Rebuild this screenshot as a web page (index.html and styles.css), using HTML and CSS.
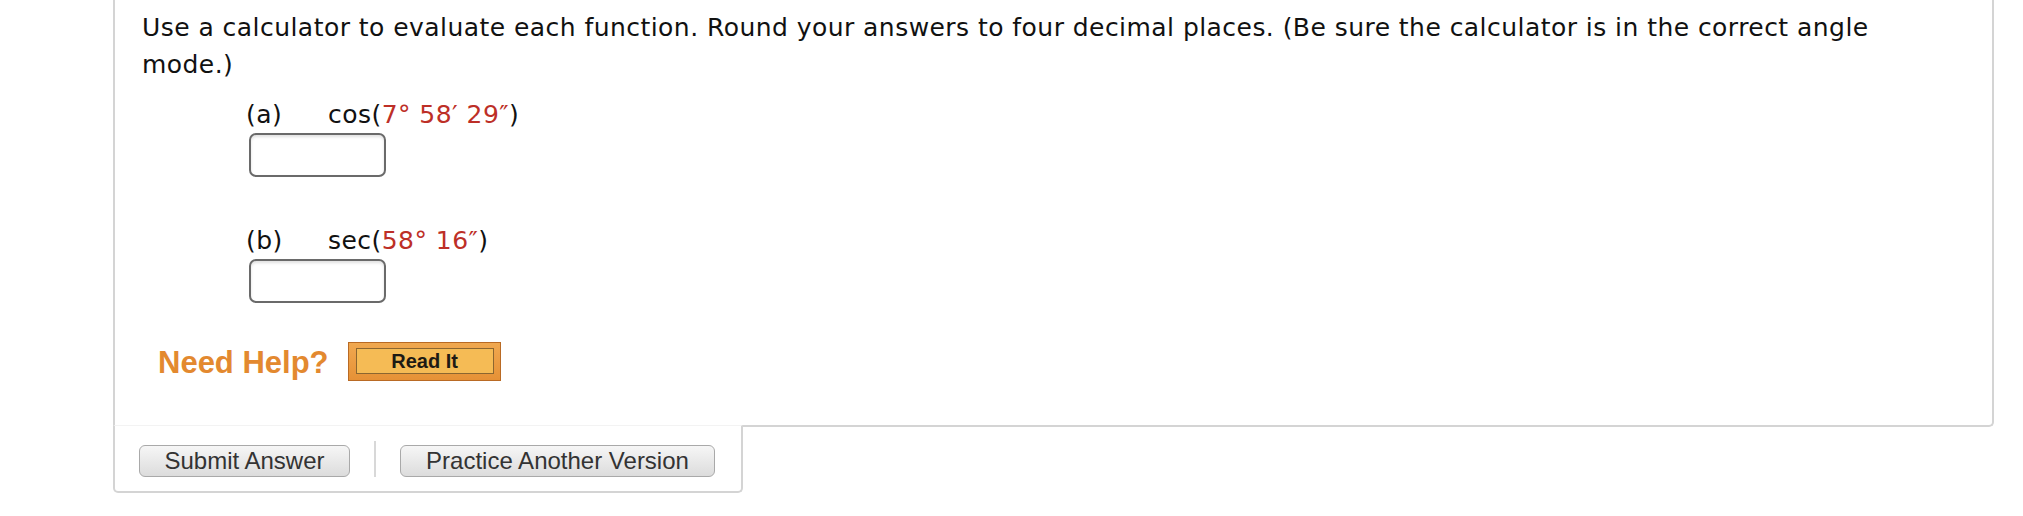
FILE: index.html
```html
<!DOCTYPE html>
<html>
<head>
<meta charset="utf-8">
<link rel="stylesheet" href="styles.css">
</head>
<body>
<div class="page">
  <div class="question">
    <p class="prompt">Use a calculator to evaluate each function. Round your answers to four decimal places. (Be sure the calculator is in the correct angle mode.)</p>
    <div class="part">
      <div class="part-line"><span class="part-label">(a)</span><span>cos(<span class="rand">7° 58′ 29″</span>)</span></div>
      <div class="answer"></div>
    </div>
    <div class="part">
      <div class="part-line"><span class="part-label">(b)</span><span>sec(<span class="rand">58° 16″</span>)</span></div>
      <div class="answer"></div>
    </div>
    <div class="help">
      <span class="help-text">Need Help?</span>
      <span class="read-it"><span class="read-it-inner">Read It</span></span>
    </div>
  </div>
  <div class="actions">
    <button class="btn">Submit Answer</button>
    <span class="sep"></span>
    <button class="btn btn-wide">Practice Another Version</button>
  </div>
</div>
</body>
</html>
```
FILE: styles.css
```css
html, body {
  margin: 0;
  padding: 0;
  background: #ffffff;
}
.page {
  margin-left: 113px;
  width: 1881px;
  font-family: "DejaVu Sans", Verdana, sans-serif;
  color: #111;
}
.question {
  box-sizing: border-box;
  border: 2px solid #d4d4d4;
  border-top: none;
  border-bottom-right-radius: 5px;
  padding: 9px 72px 0 27px;
  height: 427px;
}
.prompt {
  margin: 0;
  font-size: 25px;
  letter-spacing: 0.45px;
  line-height: 37px;
}
.part {
  margin-left: 104px;
  font-size: 25px;
  letter-spacing: 0.45px;
  line-height: 37px;
}
.part + .part {
  margin-top: 45px;
}
.part:first-of-type {
  margin-top: 13px;
}
.part-line {
  display: flex;
}
.part-label {
  width: 82px;
}
.rand {
  color: #bd2f27;
}
.answer {
  box-sizing: border-box;
  margin-left: 3px;
  width: 137px;
  height: 44px;
  border: 2px solid #6a6a6a;
  border-radius: 7px;
  box-shadow: inset 0 2px 3px rgba(0, 0, 0, 0.12);
  background: #fff;
}
.help {
  display: flex;
  align-items: center;
  margin-top: 39px;
  margin-left: 16px;
  height: 39px;
}
.help-text {
  font-family: "Liberation Sans", Arial, sans-serif;
  font-weight: bold;
  font-size: 31px;
  color: #e3892f;
  margin-right: 19px;
  position: relative;
  top: 1px;
}
.read-it {
  box-sizing: border-box;
  display: flex;
  width: 153px;
  height: 39px;
  padding: 5px 6px 6px 7px;
  border: 1px solid #b96a24;
  background: linear-gradient(#f0a850, #e69136);
}
.read-it-inner {
  flex: 1;
  display: flex;
  align-items: center;
  justify-content: center;
  border: 1px solid #8c6630;
  background: #f5bb55;
  font-family: "Liberation Sans", Arial, sans-serif;
  font-weight: bold;
  font-size: 20px;
  color: #1e1a14;
}
.actions {
  box-sizing: border-box;
  position: relative;
  margin-top: -2px;
  width: 630px;
  height: 68px;
  border: 2px solid #d4d4d4;
  border-top: 1px solid #f3f3f3;
  border-radius: 0 0 5px 5px;
  background: #fff;
  display: flex;
  align-items: center;
  padding: 0 0 0 24px;
}
.btn {
  box-sizing: border-box;
  width: 211px;
  height: 32px;
  margin-top: 4px;
  border: 1px solid #a9a9a9;
  border-radius: 6px;
  background: linear-gradient(#f6f6f6, #dcdcdc);
  font-family: "Liberation Sans", Arial, sans-serif;
  font-size: 24px;
  color: #333;
  padding: 0;
  line-height: 30px;
}
.btn-wide {
  width: 315px;
}
.sep {
  width: 2px;
  height: 36px;
  background: #d8d8d8;
  margin: 0 24px 0 24px;
}
```
